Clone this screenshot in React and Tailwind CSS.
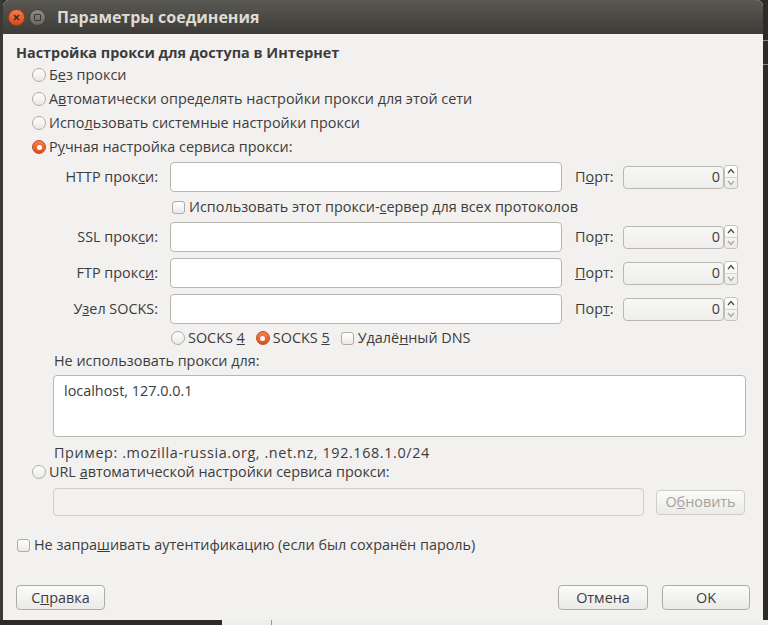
import React from 'react';

function Radio({ checked }) {
  if (checked) {
    return (
      <span className="w-[14px] h-[14px] rounded-full bg-linear-to-b from-[#f3824f] to-[#d94f1c] border border-[#c44a1d] flex items-center justify-center shrink-0">
        <span className="w-[5px] h-[5px] rounded-full bg-white" />
      </span>
    );
  }
  return <span className="w-[14px] h-[14px] rounded-full border border-[#aeaca7] bg-linear-to-b from-white to-[#eceae7] shrink-0" />;
}

function Check() {
  return <span className="w-[13px] h-[13px] rounded-[3px] border border-[#aeaca7] bg-linear-to-b from-white to-[#eceae7] shrink-0" />;
}

function Spinner() {
  return (
    <div className="w-[14px] h-[24px] flex flex-col border border-[#c4c2bd] rounded-[3px] bg-linear-to-b from-white to-[#ecebe8]">
      <div className="flex-1 flex items-center justify-center border-b border-[#d6d4cf]">
        <svg width="8" height="6" viewBox="0 0 8 6"><path d="M1 5 L4 1.5 L7 5" fill="none" stroke="#4a4a4a" strokeWidth="1.3" /></svg>
      </div>
      <div className="flex-1 flex items-center justify-center">
        <svg width="8" height="6" viewBox="0 0 8 6"><path d="M1 1 L4 4.5 L7 1" fill="none" stroke="#aaa8a3" strokeWidth="1.3" /></svg>
      </div>
    </div>
  );
}

function ProxyRow({ label, portLabel, className = '' }) {
  return (
    <div className={`flex items-center h-[30px] ${className}`}>
      <div className="w-[155px] text-right">{label}</div>
      <div className="ml-[12px] w-[392px] h-[30px] rounded-[4px] border border-[#b9b7b2] bg-white" />
      <div className="ml-[13px] w-[48px]">{portLabel}</div>
      <div className="w-[101px] h-[23px] rounded-[4px] border border-[#b9b7b2] bg-linear-to-b from-[#f7f7f6] to-[#efeeec] flex items-center justify-end pr-[3px]">0</div>
      <Spinner />
    </div>
  );
}

function Button({ children, className = '', disabled }) {
  return (
    <div className={`h-[25px] rounded-[4px] border flex items-center justify-center bg-linear-to-b from-[#fbfbfa] to-[#ebeae7] ${disabled ? 'border-[#cfcdc8] text-[#a3a19c]' : 'border-[#aeaca6] text-[#3c3c3c]'} ${className}`}>
      {children}
    </div>
  );
}

export default function App() {
  return (
    <div className="w-[768px] h-[625px] bg-[#2c2b28] flex flex-col overflow-hidden font-['Open_Sans','Noto_Sans',sans-serif] text-[14.4px] text-[#3c3c3c]">
      <div className="flex h-[620px]">
        <div className="w-[3px] bg-[#3a3935]" />
        <div className="w-[760px] flex flex-col bg-[#f2f1f0] rounded-t-[6px] overflow-hidden">
          {/* Title bar */}
          <div className="h-[34px] shrink-0 bg-linear-to-b from-[#5a5852] to-[#3c3b37] flex items-center">
            <div className="ml-[5px] w-[17px] h-[17px] rounded-full bg-linear-to-b from-[#f57b4b] to-[#d84a1a] border border-[#9f3b17] flex items-center justify-center">
              <svg width="7" height="7" viewBox="0 0 7 7"><path d="M1 1 L6 6 M6 1 L1 6" stroke="#3a2a20" strokeWidth="1.5" /></svg>
            </div>
            <div className="ml-[4px] w-[17px] h-[17px] rounded-full bg-linear-to-b from-[#8e8b84] to-[#6a6862] border border-[#3e3c38] flex items-center justify-center">
              <span className="w-[7px] h-[7px] border border-[#3a3935] rounded-[1px]" />
            </div>
            <div className="ml-[11px] text-[16px] font-bold text-[#dfdbd2]">Параметры соединения</div>
          </div>

          {/* Body */}
          <div className="flex flex-col pt-[8px]">
            <div className="h-[21px] leading-[21px] ml-[13px] font-bold">Настройка прокси для доступа в Интернет</div>

            <div className="ml-[29px] flex flex-col">
              <div className="h-[24px] flex items-center gap-[3px]"><Radio /><span>Б<u>е</u>з прокси</span></div>
              <div className="h-[24px] flex items-center gap-[3px]"><Radio /><span>А<u>в</u>томатически определять настройки прокси для этой сети</span></div>
              <div className="h-[24px] flex items-center gap-[3px]"><Radio /><span>Испо<u>л</u>ьзовать системные настройки прокси</span></div>
              <div className="h-[24px] flex items-center gap-[3px]"><Radio checked /><span>Р<u>у</u>чная настройка сервиса прокси:</span></div>
            </div>

            <ProxyRow className="mt-[3px]" label={<>HTTP прок<u>с</u>и:</>} portLabel={<>П<u>о</u>рт:</>} />
            <div className="h-[30px] flex items-center ml-[169px] gap-[4px]"><Check /><span>Использовать этот прокси-<u>с</u>ервер для всех протоколов</span></div>
            <ProxyRow label={<>SSL прок<u>с</u>и:</>} portLabel={<>По<u>р</u>т:</>} />
            <ProxyRow className="mt-[6px]" label={<>FTP прокс<u>и</u>:</>} portLabel={<><u>П</u>орт:</>} />
            <ProxyRow className="mt-[6px]" label={<>У<u>з</u>ел SOCKS:</>} portLabel={<>Пор<u>т</u>:</>} />

            <div className="h-[28px] flex items-center ml-[168px]">
              <Radio />
              <span className="ml-[3px]">SOCKS <u>4</u></span>
              <span className="ml-[11px] flex"><Radio checked /></span>
              <span className="ml-[3px]">SOCKS <u>5</u></span>
              <span className="ml-[11px] flex"><Check /></span>
              <span className="ml-[4px]">Удалё<u>н</u>ный DNS</span>
            </div>

            <div className="h-[18px] leading-[18px] ml-[51px]">Не использовать прокси <u>д</u>ля:</div>
            <div className="mt-[5px] ml-[50px] w-[693px] h-[62px] rounded-[4px] border border-[#b9b7b2] bg-white px-[10px] pt-[4px]">localhost, 127.0.0.1</div>

            <div className="mt-[7px] h-[18px] leading-[18px] ml-[51px] tracking-[0.6px]">Пример: .mozilla-russia.org, .net.nz, 192.168.1.0/24</div>
            <div className="h-[20px] flex items-center ml-[29px] gap-[3px]"><Radio /><span>URL <u>а</u>втоматической настройки сервиса прокси:</span></div>
            <div className="mt-[6px] ml-[50px] flex items-center h-[28px]">
              <div className="w-[591px] h-[28px] rounded-[4px] border border-[#cfcdc8] bg-[#f2f1f0]" />
              <Button disabled className="ml-[12px] w-[89px] h-[23px]">О<u>б</u>новить</Button>
            </div>

            <div className="mt-[19px] h-[20px] flex items-center ml-[14px] gap-[4px]"><Check /><span>Не запра<u>ш</u>ивать аутентификацию (если был сохранён пароль)</span></div>

            <div className="mt-[30px] flex items-center ml-[13px]">
              <Button className="w-[89px]">С<u>п</u>равка</Button>
              <Button className="ml-[453px] w-[90px]">Отмена</Button>
              <Button className="ml-[14px] w-[88px]">OK</Button>
            </div>
          </div>
        </div>
        <div className="w-[5px] flex flex-col bg-[#2c2b28]">
          <div className="h-[40px]" />
          <div className="h-[1px] bg-[#8a8780]" />
          <div className="h-[23px]" />
          <div className="h-[1px] bg-[#8a8780]" />
        </div>
      </div>
      <div className="flex h-[5px]">
        <div className="w-[222px] bg-[#2c2b28]" />
        <div className="w-[50px] bg-[#eeeeec] border-r border-[#9a9893]" />
        <div className="flex-1 bg-[#eeeeec]" />
      </div>
    </div>
  );
}
